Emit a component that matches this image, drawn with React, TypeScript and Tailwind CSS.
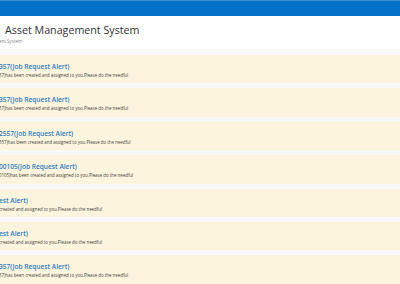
import React from "react";

const cards = [
  { t: "357(Job Request Alert)", m: "57)has been created and assigned to you.Please do the needful" },
  { t: "357(Job Request Alert)", m: "57)has been created and assigned to you.Please do the needful" },
  { t: "2557(Job Request Alert)", m: "557)has been created and assigned to you.Please do the needful" },
  { t: "00105(Job Request Alert)", m: "0105)has been created and assigned to you.Please do the needful" },
  { t: "est Alert)", m: "created and assigned to you.Please do the needful" },
  { t: "est Alert)", m: "created and assigned to you.Please do the needful" },
  { t: "357(Job Request Alert)", m: "57)has been created and assigned to you.Please do the needful" },
];

export default function App() {
  return (
    <div
      className="w-[400px] h-[284px] overflow-hidden bg-[#f9f9fb]"
      style={{ fontFamily: '"Open Sans", "Noto Sans", sans-serif' }}
    >
      <div className="h-[16px] bg-[#0671c8] border-t border-[#3d8fd6]" />
      <div className="h-[33px] bg-white flex flex-col pt-[7px]">
        <div className="pl-[5px] text-[10.7px] leading-[14px] text-[#333] whitespace-nowrap">
          Asset Management System
        </div>
        <div className="-ml-[1px] text-[4.5px] leading-[8px] text-[#888] whitespace-nowrap">
          ent System
        </div>
      </div>
      <div className="flex flex-col gap-[5px] pt-[6px]">
        {cards.map((c, i) => (
          <div
            key={i}
            className="h-[28.4px] bg-[#fcf4dc] flex flex-col pt-[7px] overflow-hidden"
          >
            <div className="text-[6.6px] leading-[10px] font-semibold text-[#2f7cc4] whitespace-nowrap -ml-[1px]">
              {c.t}
            </div>
            <div className="text-[4.4px] leading-[7px] text-[#444] whitespace-nowrap -ml-[1px]">
              {c.m}
            </div>
          </div>
        ))}
      </div>
    </div>
  );
}
